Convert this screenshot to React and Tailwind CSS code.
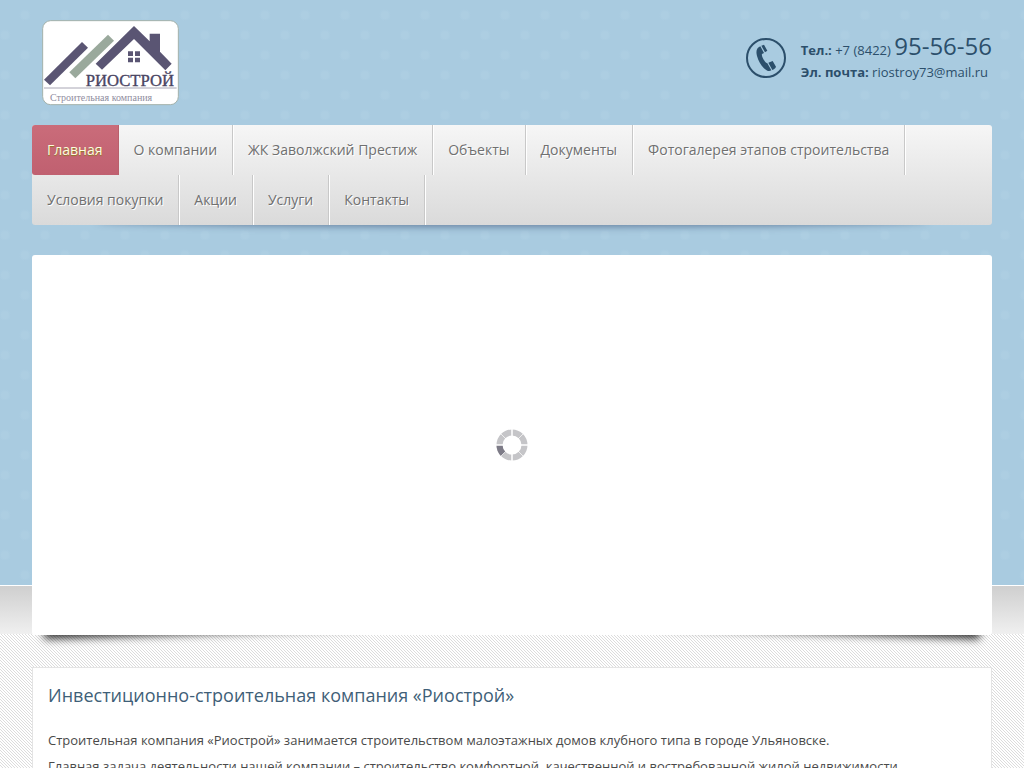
const menu = [
  { title: "Главная", active: true },
  { title: "О компании" },
  { title: "ЖК Заволжский Престиж" },
  { title: "Объекты" },
  { title: "Документы" },
  { title: "Фотогалерея этапов строительства" },
  { title: "Условия покупки" },
  { title: "Акции" },
  { title: "Услуги" },
  { title: "Контакты" },
];

function Logo() {
  return (
    <svg width="138" height="86" viewBox="30 29 414 258" role="img" aria-label="Риострой">
      <rect x="32" y="31" width="407" height="252" rx="24" fill="#fff" stroke="#a3b1aa" strokeWidth="3" />
      <g fill="#5a5573">
        <path d="M36 208 L150 95 L168 112 L54 225 Z" />
        <path d="M191 160 L306 47 L353 93 V70 H384 V124 L419 160 L400 180 L306 86 L210 178 Z" />
        <path d="M288 123h15v14h-15z M309 123h15v14h-15z M288 142h15v14h-15z M309 142h15v14h-15z" />
      </g>
      <path d="M112 186 L228 73 L246 91 L130 204 Z" fill="#9aa99c" />
      <path d="M36 233 H434" stroke="#a8a6b4" strokeWidth="3" />
      <text x="161" y="227" fontSize="50" fill="#4a4563" stroke="#4a4563" className="font-['Liberation_Serif',serif]">
        РИОСТРОЙ
      </text>
      <text x="54" y="271" fontSize="30" fill="#8f8da0" className="font-['Liberation_Serif',serif]">
        Строительная компания
      </text>
    </svg>
  );
}

function PhoneIcon() {
  return (
    <svg width="40" height="40" viewBox="0 0 120 120" fill="#2c4f6b" aria-hidden="true">
      <circle cx="60" cy="60" r="57" fill="none" stroke="#2c4f6b" strokeWidth="6" />
      <path d="M43 25 C32 29 29 40 33 54 C38 73 50 91 64 98 C69 100 73 99 76 97 L64 76 C58 76 45 54 48 48 L54 45 Z" />
      <path d="M46 23 L54 20 L64 38 L57 43 Z M67 74 L80 69 L90 86 C88 91 84 94 79 96 Z" />
    </svg>
  );
}

function Spinner() {
  return (
    <svg width="32" height="32" viewBox="0 0 32 32" role="img" aria-label="Загрузка">
      <circle cx="16" cy="16" r="12.5" fill="none" stroke="#c5c5c8" strokeWidth="6" />
      <path d="M6.5 16 A9.5 9.5 0 0 0 9.3 22.7 L5 27 A15.5 15.5 0 0 1 0.5 16 Z" fill="#7d7b87" />
      <path d="M16 0V32M0 16H32" stroke="#fff" strokeWidth="1.5" />
      <path d="M4.7 4.7L27.3 27.3M27.3 4.7L4.7 27.3" stroke="#fff" strokeWidth="0.7" />
    </svg>
  );
}

function Header() {
  return (
    <header className="flex items-start justify-between pt-5 pl-[10px]">
      <a href="#">
        <Logo />
      </a>
      <div className="flex items-center gap-[15px] pt-3">
        <PhoneIcon />
        <div className="text-[13px] text-[#2c4f6b]">
          <p className="leading-5">
            <b>Тел.:</b> +7 (8422) <span className="text-2xl leading-7">95-56-56</span>
          </p>
          <p className="leading-6">
            <b>Эл. почта:</b> <a href="mailto:riostroy73@mail.ru">riostroy73@mail.ru</a>
          </p>
        </div>
      </div>
    </header>
  );
}

function Menu() {
  return (
    <div className="relative isolate mt-[19px]">
      {/* soft shadow under the bar */}
      <div className="absolute inset-x-16 bottom-0 -z-10 h-3 rounded-[50%] shadow-[0_2px_7px_rgba(40,60,100,0.5)]" />
      <nav className="rounded-[3px] bg-linear-to-b from-[#f6f6f6] to-[#dadada]">
        <ul className="flex flex-wrap">
          {menu.map((item) => (
            <li key={item.title}>
              <a
                href="#"
                className={
                  item.active
                    ? "block rounded-l-[3px] border-r border-[#b9606c] bg-linear-to-b from-[#ca6c7a] to-[#c06070] px-[15px] text-sm leading-[50px] text-[#fffbe0] [text-shadow:0_1px_1px_#8a7a20]"
                    : "block border-r border-[#c8c8c8] px-[15px] text-sm leading-[50px] text-[#707070] shadow-[1px_0_0_#fff] [text-shadow:1px_1px_0_#fff]"
                }
              >
                {item.title}
              </a>
            </li>
          ))}
        </ul>
      </nav>
    </div>
  );
}

function Slider() {
  return (
    <div className="relative isolate z-10 mt-[30px] -mb-[50px]">
      {/* lifted corners */}
      <div className="absolute bottom-[10px] left-[12px] -z-10 h-5 w-1/3 origin-bottom-left rotate-[-2deg] shadow-[0_14px_8px_rgba(0,0,0,0.8)]" />
      <div className="absolute right-[12px] bottom-[10px] -z-10 h-5 w-1/3 origin-bottom-right rotate-[2deg] shadow-[0_14px_8px_rgba(0,0,0,0.8)]" />
      <div className="flex h-[380px] items-center justify-center rounded-[3px] bg-white">
        <Spinner />
      </div>
    </div>
  );
}

export default function App() {
  return (
    <div className="h-screen overflow-hidden bg-[linear-gradient(45deg,#ffffff_35%,#dcdcdc_35%_65%,#ffffff_65%)] bg-size-[3px_3px] font-['Open_Sans','Noto_Sans',sans-serif]">
      {/* the slider hangs over the lower edge of this band */}
      <div className="border-b border-white bg-[#a9cbe0] bg-[radial-gradient(circle_at_25px_15px,#adcee2_0_3px,transparent_6px),radial-gradient(circle_at_5px_35px,#adcee2_0_3px,transparent_6px)] bg-size-[40px_40px] px-8">
        <div className="mx-auto max-w-[1200px]">
          <Header />
          <Menu />
          <Slider />
        </div>
      </div>
      <div className="bg-linear-to-b from-[#cfcfcf] to-[#f0f0f0] bg-size-[100%_48px] bg-no-repeat px-8 pt-[81px]">
        <main className="mx-auto max-w-[1200px] border border-[#e4e4e4] bg-white px-[15px] pb-5 text-[13px] leading-[26px] text-[#4a4a4a]">
          <h1 className="pt-3 text-lg leading-[30px] text-[#3f5f78]">
            Инвестиционно-строительная компания «Риострой»
          </h1>
          <p className="mt-[17px]">
            Строительная компания «Риострой» занимается строительством малоэтажных домов клубного типа в городе
            Ульяновске.
          </p>
          <p>
            Главная задача деятельности нашей компании – строительство комфортной, качественной и востребованной
            жилой недвижимости.
          </p>
        </main>
      </div>
    </div>
  );
}
